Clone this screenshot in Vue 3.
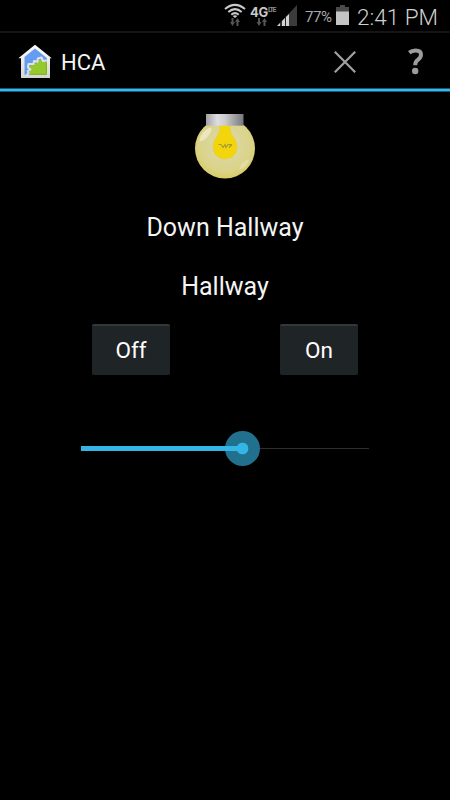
<script setup>
import { ref } from 'vue'

const level = ref(56)
</script>

<template>
  <div class="screen">
    <div class="status">
      <svg class="wifi" width="22" height="26" viewBox="0 0 22 26">
        <g fill="none" stroke="#c9c9c9" stroke-width="2">
          <path d="M1 9Q11 .8 21 9" />
          <path d="M4.300 12Q11 6.200 17.700 12" />
          <path d="M7.300 14.700Q11 11.500 14.700 14.700" />
        </g>
        <path d="M8.700 15.900Q11 14.400 13.300 15.900L11 18Z" fill="#d0d0d0" />
        <path d="M7.500 18h2v4h1.500l-2.500 4-2.500-4h1.500zM12.500 26h2v-4H16l-2.500-4-2.500 4h1.500z" fill="#555" />
      </svg>
      <div class="network">
        <div class="gen"><span class="four">4G</span><span class="lte">LTE</span></div>
        <svg width="12" height="8" viewBox="0 0 12 8">
          <path d="M2 0h2v4h1.500L3 8 .500 4H2zM7.500 8h2V4H11L8.500 0 6 4h1.500z" fill="#555" />
        </svg>
      </div>
      <svg class="signal" width="21" height="22" viewBox="0 0 21 22">
        <path d="M0 21L20 0V21Z" fill="#3b3b3b" />
        <path d="M0 21L3 18V21ZM5 21V16L8 13V21ZM9 21V12L12 9V21Z" fill="#d2d2d2" />
        <path d="M4 15v6M8.500 11v10" stroke="#222" stroke-width=".8" />
      </svg>
      <span class="percent">77%</span>
      <svg class="battery" width="13" height="20" viewBox="0 0 13 20">
        <path d="M4 0h5v2h4v5H0V2h4z" fill="#4b4b4b" />
        <path d="M0 6.500h13V20H0z" fill="#c4c4c4" />
      </svg>
      <span class="time">2:41 PM</span>
    </div>

    <header class="bar">
      <svg class="house" width="36" height="36" viewBox="0 0 36 36">
        <defs>
          <linearGradient id="wall" x1="0" y1="0" x2="0" y2="1">
            <stop offset="0" stop-color="#fff" />
            <stop offset="1" stop-color="#d4d4d2" />
          </linearGradient>
        </defs>
        <path d="M1.300 14.300L18 .800 34.800 14.300H33V34H4V14.300Z" fill="url(#wall)" />
        <path d="M7.500 13L18 4.500 29.800 14V30.800H7.500Z" fill="#659bf3" />
        <path d="M12.500 30.800L13 26 12 22.500 16 20.500 19 19 23.500 15.500 27 18H29.800V30.800Z" fill="#96c92f" />
        <path d="M9.500 31.500L11.500 29 10.800 27 13.500 25.500 11 23.500 11.500 20 16.500 20 17 17 20.500 17.800 20.800 14.500 24.500 13.500 26 17 29.800 16.500" fill="none" stroke="#dfe3e2" stroke-width="2" stroke-linejoin="round" />
        <path d="M14 30.300H29.300V18.500" fill="none" stroke="#83b516" stroke-width="1" />
      </svg>
      <h1 class="title">HCA</h1>
      <svg class="close" width="22" height="22" viewBox="0 0 22 22">
        <path d="M.8 .8L21.200 21.200M21.200 .8L.8 21.200" stroke="#a0a0a0" stroke-width="2.200" />
      </svg>
      <svg class="help" width="16" height="27" viewBox="0 0 16 27">
        <path d="M1.200 4.600Q4 2.500 7.600 2.500C11 2.500 13 4 13 6.800C13 9.200 11.700 10.500 9.800 11.800C7.700 13.200 7.200 14.200 7.200 17.200" fill="none" stroke="#9c9c9c" stroke-width="4" />
        <circle cx="7.200" cy="23" r="3.200" fill="#9c9c9c" />
      </svg>
    </header>

    <main class="content">
      <svg class="lamp" width="62" height="66" viewBox="0 0 62 66">
        <defs>
          <radialGradient id="globe" cx=".5" cy=".45" r=".55">
            <stop offset="0" stop-color="#e3dc82" />
            <stop offset=".45" stop-color="#dbd69a" />
            <stop offset=".8" stop-color="#dad388" />
            <stop offset="1" stop-color="#d9cd65" />
          </radialGradient>
          <linearGradient id="cap">
            <stop offset="0" stop-color="#a2a2a4" />
            <stop offset=".3" stop-color="#dedee0" />
            <stop offset=".5" stop-color="#cdcdcf" />
            <stop offset="1" stop-color="#77777b" />
          </linearGradient>
        </defs>
        <circle cx="31" cy="34.500" r="30" fill="url(#globe)" />
        <ellipse cx="11.500" cy="20.500" rx="8.500" ry="3" transform="rotate(-49 11.500 20.500)" fill="#ebe6c0" />
        <ellipse cx="50" cy="50.500" rx="6.500" ry="2" transform="rotate(-46 50 50.500)" fill="#e1dba5" />
        <path d="M26 11H36C36 18 37 20 40 24C42 27 43 30 43 33.500A12 11.500 0 0 1 19 33.500C19 30 20 27 22 24C25 20 26 17 26 11Z" fill="#f3d50c" stroke="#e0cf49" stroke-width=".7" />
        <path d="M24.500 30.500h2.500l2 3 2-3 1 3 2-3h3l-2 3 3-3" fill="none" stroke="#a79b38" stroke-width="1.100" />
        <rect x="12" y="0" width="37.500" height="11.700" fill="url(#cap)" />
      </svg>
      <h2 class="label name">Down Hallway</h2>
      <h2 class="label room">Hallway</h2>
      <div class="actions">
        <button type="button" class="action" @click="level = 0">Off</button>
        <button type="button" class="action" @click="level = 100">On</button>
      </div>
      <div class="slider">
        <div class="fill" :style="{ width: level + '%' }">
          <div class="thumb"></div>
        </div>
      </div>
    </main>
  </div>
</template>

<style>
body {
  margin: 0;
  background: #000;
}
</style>

<style scoped>
.screen {
  width: 450px;
  height: 800px;
  overflow: hidden;
  background: #000;
  color: #f4f4f4;
  font-family: Roboto, "Liberation Sans", sans-serif;
}
.status {
  box-sizing: border-box;
  display: flex;
  align-items: flex-start;
  height: 33px;
  padding-left: 224px;
  border-bottom: 2px solid #151515;
  white-space: nowrap;
}
.network {
  display: flex;
  flex-direction: column;
  align-items: center;
  gap: 1px;
  width: 24px;
  margin: 6px 0 0 4px;
}
.gen {
  display: flex;
  width: 24px;
  height: 11px;
  color: #c8c8c8;
}
.four {
  width: 18px;
  font: 700 13px/13px Inter, sans-serif;
  letter-spacing: -0.2px;
}
.lte {
  font: 700 7px/9px Roboto, sans-serif;
  letter-spacing: -1.4px;
  color: #888;
}
.signal {
  margin: 5px 0 0 3px;
}
.percent {
  width: 28px;
  margin: 8px 0 0 7px;
  font-size: 15px;
  line-height: 18px;
  letter-spacing: -0.4px;
  color: #aaa;
}
.battery {
  margin: 5px 0 0 3px;
}
.time {
  margin: 4px 0 0 8px;
  font-size: 22.500px;
  line-height: 27px;
  color: #cfcfcf;
  font-weight: 300;
}
.bar {
  box-sizing: border-box;
  display: flex;
  align-items: flex-start;
  height: 59px;
  padding: 11px 0 0 17px;
  background: linear-gradient(#14597a 1px, #39b7e8 1px, #39b7e8 3px, #14597a 3px) bottom / 100% 4px no-repeat;
}
.title {
  width: 60px;
  margin: 5px 0 0 8px;
  font-size: 22px;
  font-weight: 400;
  line-height: 28px;
}
.close {
  margin: 7px 0 0 213px;
}
.help {
  margin: 4px 0 0 52px;
}
.content {
  display: flex;
  flex-direction: column;
  align-items: center;
  padding-top: 22px;
}
.lamp {
  display: block;
}
.label {
  margin: 0;
  font-size: 25px;
  font-weight: 400;
  line-height: 32px;
}
.name {
  margin-top: 32px;
}
.room {
  margin-top: 27px;
}
.actions {
  display: flex;
  justify-content: space-between;
  width: 266px;
  margin-top: 21px;
}
.action {
  box-sizing: border-box;
  width: 78px;
  height: 51px;
  padding: 0 0 2px;
  border: 0;
  border-top: 2px solid #34373a;
  border-radius: 2px;
  background: #1f2427;
  color: #fff;
  font: 400 22.500px/28px Roboto, sans-serif;
}
.slider {
  display: flex;
  align-items: center;
  width: 288px;
  height: 35px;
  margin-top: 56px;
  background: linear-gradient(#2d2d2d, #2d2d2d) center / 100% 1px no-repeat;
}
.fill {
  display: flex;
  align-items: center;
  justify-content: flex-end;
  height: 5px;
  background: #33b5e5;
}
.thumb {
  flex: none;
  width: 35px;
  height: 35px;
  margin-right: -17.500px;
  border-radius: 50%;
  background:
    radial-gradient(circle, #33b5e5 5.500px, transparent 6.200px),
    linear-gradient(#33b5e5, #33b5e5) left center / 18px 5px no-repeat,
    #20708e;
}
</style>
